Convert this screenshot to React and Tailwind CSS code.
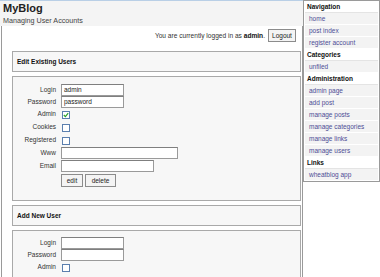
import React from 'react';

const sideSections = [
    { title: 'Navigation', links: ['home', 'post index', 'register account'] },
    { title: 'Categories', links: ['unfiled'] },
    {
        title: 'Administration',
        links: ['admin page', 'add post', 'manage posts', 'manage categories', 'manage links', 'manage users'],
    },
    { title: 'Links', links: ['wheatblog app'] },
];

function TextInput({ value = '', width }) {
    return (
        <div
            className={`h-[12px] ${width} border border-[#9a9a9a] border-t-[#7f7f7f] bg-white pl-[2px] text-[6.5px] leading-[10px] text-[#222]`}
        >
            {value}
        </div>
    );
}

function Checkbox({ checked }) {
    return (
        <div className="w-[8px] h-[8px] ml-[1px] border border-[#5b7fae] bg-white flex items-center justify-center">
            {checked && (
                <svg width="6" height="6" viewBox="0 0 6 6">
                    <path d="M0.8 3 L2.4 4.6 L5.2 1.2" fill="none" stroke="#2aa02a" strokeWidth="1.2" />
                </svg>
            )}
        </div>
    );
}

function Label({ children }) {
    return <div className="text-right text-[6.5px] leading-none text-[#333]">{children}</div>;
}

function Button({ children, width }) {
    return (
        <div
            className={`h-[13px] ${width} border border-[#8c8c8c] bg-[#f4f4f4] flex items-center justify-center text-[6.5px] text-[#222]`}
        >
            {children}
        </div>
    );
}

function SectionTitle({ children }) {
    return (
        <div className="h-[21px] border border-[#a9a9a9] bg-[#f7f7f7] pl-[4px] flex items-center text-[6.5px] font-bold text-[#111]">
            {children}
        </div>
    );
}

export default function App() {
    return (
        <div className="flex w-[380px] h-[277px] overflow-hidden bg-white font-['Liberation_Sans',Arial,sans-serif] text-[#333]">
            <div className="w-[303px] flex flex-col">
                <header className="h-[30px] bg-[#f4f4f4] border-t border-[#b9cfe6] px-[3px]">
                    <h1 className="text-[11px] font-bold leading-[14px] text-[#222]">MyBlog</h1>
                    <p className="text-[7.2px] leading-[10px] mt-[1px] text-[#444]">Managing User Accounts</p>
                </header>

                <main className="flex-1 ml-[1px] border-l border-r border-[#9a9a9a] pl-[10px] pr-[1px]">
                    <div className="flex justify-end items-center gap-[3px] mt-[3px] pr-[5px] text-[6.6px]">
                        <span>
                            You are currently logged in as <b className="text-[#111]">admin</b>.
                        </span>
                        <Button width="w-[28px]">Logout</Button>
                    </div>

                    <div className="mt-[9px]">
                        <SectionTitle>Edit Existing Users</SectionTitle>
                    </div>

                    <div className="mt-[4px] h-[125px] border border-[#a9a9a9] bg-[#f7f7f7] pt-[7px]">
                        <div className="grid grid-cols-[43px_1fr] gap-x-[5px] items-center">
                            <Label>Login</Label>
                            <div className="h-[12px]"><TextInput value="admin" width="w-[63px]" /></div>
                            <Label>Password</Label>
                            <div className="h-[12px]"><TextInput value="password" width="w-[63px]" /></div>
                            <Label>Admin</Label>
                            <div className="h-[13px] flex items-center"><Checkbox checked /></div>
                            <Label>Cookies</Label>
                            <div className="h-[13px] flex items-center"><Checkbox /></div>
                            <Label>Registered</Label>
                            <div className="h-[13px] flex items-center"><Checkbox /></div>
                            <Label>Www</Label>
                            <div className="h-[13px]"><TextInput width="w-[117px]" /></div>
                            <Label>Email</Label>
                            <div className="h-[12px]"><TextInput width="w-[93px]" /></div>
                            <div />
                            <div className="flex gap-[2px] mt-[2px]">
                                <Button width="w-[22px]">edit</Button>
                                <Button width="w-[31px]">delete</Button>
                            </div>
                        </div>
                    </div>

                    <div className="mt-[4px]">
                        <SectionTitle>Add New User</SectionTitle>
                    </div>

                    <div className="mt-[4px] h-[60px] border border-[#a9a9a9] bg-[#f7f7f7] pt-[6px]">
                        <div className="grid grid-cols-[43px_1fr] gap-x-[5px] items-center">
                            <Label>Login</Label>
                            <div className="h-[12px]"><TextInput width="w-[63px]" /></div>
                            <Label>Password</Label>
                            <div className="h-[12px]"><TextInput width="w-[63px]" /></div>
                            <Label>Admin</Label>
                            <div className="h-[13px] flex items-center"><Checkbox /></div>
                        </div>
                    </div>
                </main>
            </div>

            <aside className="w-[77px] h-[182px] border border-[#9a9a9a] bg-white px-[1px] text-[6.5px]">
                {sideSections.map((section) => (
                    <div key={section.title}>
                        <div className="h-[12px] pl-[2px] flex items-center font-bold text-[#111] border-b border-[#e4e4e4]">
                            {section.title}
                        </div>
                        {section.links.map((link) => (
                            <div
                                key={link}
                                className="h-[12px] pl-[4px] flex items-center bg-[#f3f3f3] border-b border-white text-[#4d4d95]"
                            >
                                {link}
                            </div>
                        ))}
                    </div>
                ))}
            </aside>
        </div>
    );
}
